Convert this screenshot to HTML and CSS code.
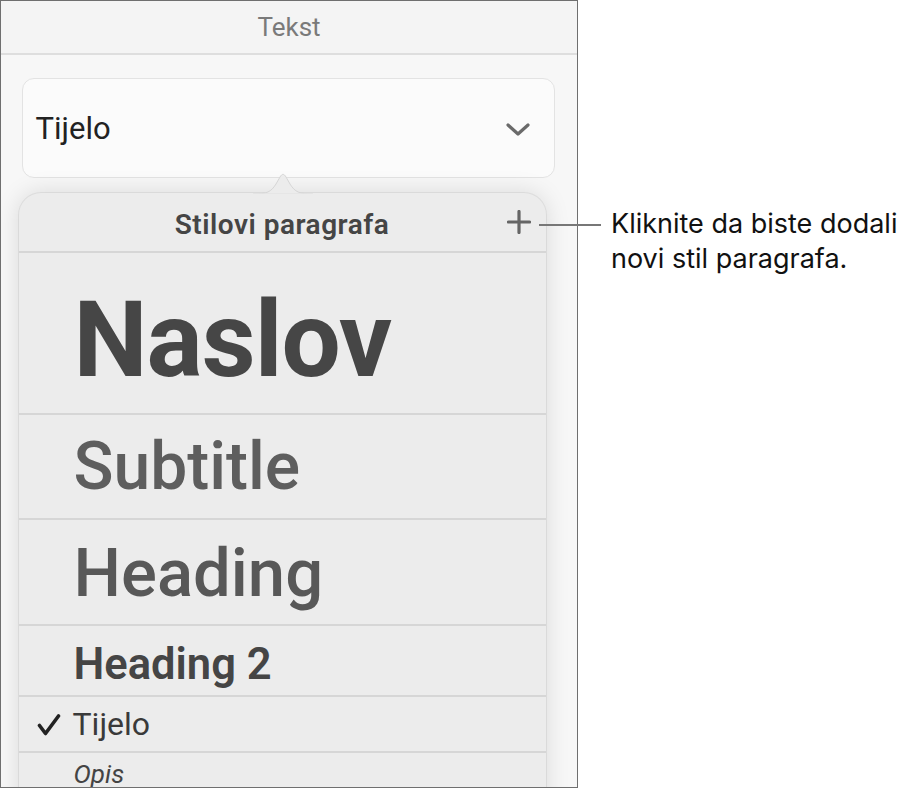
FILE: index.html
```html
<!DOCTYPE html>
<html lang="hr">
<head>
<meta charset="utf-8">
<title>Tekst</title>
<link rel="stylesheet" href="styles.css">
</head>
<body>
<div class="stage">
  <div class="panel">
    <div class="panel-header">Tekst</div>
    <div class="panel-body">
      <div class="dropdown">
        <span class="dropdown-label">Tijelo</span>
        <svg class="chevron" width="24" height="14" viewBox="0 0 24 14"><path d="M2 2 L12 11 L22 2" fill="none" stroke="#6a6a6a" stroke-width="3.2" stroke-linecap="round" stroke-linejoin="round"/></svg>
      </div>
      <div class="popover">
        <svg class="popover-arrow" width="60" height="30" viewBox="0 0 60 30"><path d="M0 29 C14 29 18 27 23 19 L27 12 C29 8.5 31 8.5 33 12 L37 19 C42 27 46 29 60 29 Z" fill="#ececec" stroke="#d6d6d6" stroke-width="1"/><rect x="0" y="28.5" width="60" height="2" fill="#ececec"/></svg>
        <div class="popover-header">
          <span class="popover-title">Stilovi paragrafa</span>
          <svg class="plus" width="24" height="24" viewBox="0 0 24 24"><path d="M12 1.5 V22.5 M1.5 12 H22.5" stroke="#656565" stroke-width="3.2" stroke-linecap="round"/></svg>
        </div>
        <div class="row row-naslov"><span class="naslov">Naslov</span></div>
        <div class="row row-subtitle"><span class="subtitle">Subtitle</span></div>
        <div class="row row-heading"><span class="heading">Heading</span></div>
        <div class="row row-heading2"><span class="heading2">Heading 2</span></div>
        <div class="row row-tijelo">
          <svg class="check" width="24" height="22" viewBox="0 0 24 22"><path d="M2.5 11.5 L8.5 19.5 L21.5 2" fill="none" stroke="#222" stroke-width="3.6" stroke-linecap="round" stroke-linejoin="round"/></svg>
          <span class="tijelo">Tijelo</span>
        </div>
        <div class="row row-opis"><span class="opis">Opis</span></div>
      </div>
    </div>
  </div>
  <div class="leader"></div>
  <div class="callout">Kliknite da biste dodali<br>novi stil paragrafa.</div>
</div>
</body>
</html>
```

FILE: styles.css
```css
* { box-sizing: border-box; }
html, body { margin: 0; padding: 0; background: #ffffff; }
body { font-family: Roboto, "Liberation Sans", Arial, sans-serif; }

.stage {
  position: relative;
  display: flex;
  width: 916px;
  height: 788px;
  overflow: hidden;
}

.panel {
  width: 578px;
  height: 788px;
  flex: none;
  border: 1.5px solid #6f6f6f;
  background: #f7f7f7;
  display: flex;
  flex-direction: column;
  overflow: hidden;
}

.panel-header {
  height: 54px;
  flex: none;
  background: #f4f4f4;
  border-bottom: 2px solid #dedede;
  display: flex;
  align-items: center;
  justify-content: center;
  color: #7a7a7a;
  font-size: 26px;
  padding-bottom: 1px;
}

.panel-body {
  padding: 23px 0 0 17.5px;
}

.dropdown {
  margin-left: 3px;
  width: 533px;
  height: 100px;
  background: #fbfbfb;
  border: 1.5px solid #e3e3e3;
  border-radius: 12px;
  display: flex;
  align-items: center;
  justify-content: space-between;
  padding: 0 24px 0 13px;
}

.dropdown-label {
  font-size: 31px;
  color: #222;
}

.chevron { margin-top: 3px; }

.popover {
  position: relative;
  margin-top: 15px;
  width: 527px;
  background: #ececec;
  border-radius: 22px 22px 0 0;
  box-shadow: 0 0 24px rgba(0,0,0,0.13), 0 0 0 1px rgba(0,0,0,0.06);
}

.popover-arrow {
  position: absolute;
  left: 234px;
  top: -28px;
}

.popover-header {
  height: 60px;
  border-bottom: 2px solid #d6d6d6;
  display: flex;
  align-items: center;
  justify-content: center;
  position: relative;
}

.popover-title {
  font-size: 28px;
  font-weight: 600;
  color: #454545;
  letter-spacing: 0.5px;
  margin-top: 4px;
}

.plus {
  position: absolute;
  right: 15px;
  top: 17px;
}

.row {
  display: flex;
  align-items: center;
  padding-left: 55px;
  border-bottom: 2px solid #d6d6d6;
}

.row-naslov { height: 162px; padding-top: 14px; }
.row-subtitle { height: 105px; }
.row-heading { height: 106px; padding-top: 2px; }
.row-heading2 { height: 71px; padding-top: 8px; }
.row-tijelo { height: 56px; padding-left: 18px; }
.row-opis { height: 60px; align-items: flex-start; padding-top: 6px; border-bottom: none; }

.naslov {
  font-size: 105px;
  font-weight: 700;
  color: #464646;
  letter-spacing: -1px;
}

.subtitle {
  font-size: 66px;
  font-weight: 500;
  color: #5e5e5e;
}

.heading {
  font-size: 67px;
  font-weight: 500;
  color: #585858;
}

.heading2 {
  font-size: 43.5px;
  font-weight: 600;
  color: #454545;
}

.check { margin-right: 12px; margin-top: 2px; }

.tijelo {
  font-size: 32px;
  color: #3a3a3a;
}

.opis {
  font-size: 26px;
  font-style: italic;
  color: #444;
}

.leader {
  position: absolute;
  left: 539px;
  top: 224px;
  width: 62px;
  height: 1.5px;
  background: #777;
}

.callout {
  margin-left: 33px;
  padding-top: 206px;
  font-family: Inter, "Liberation Sans", Arial, sans-serif;
  font-size: 27px;
  line-height: 35px;
  color: #111;
  white-space: nowrap;
}
```
